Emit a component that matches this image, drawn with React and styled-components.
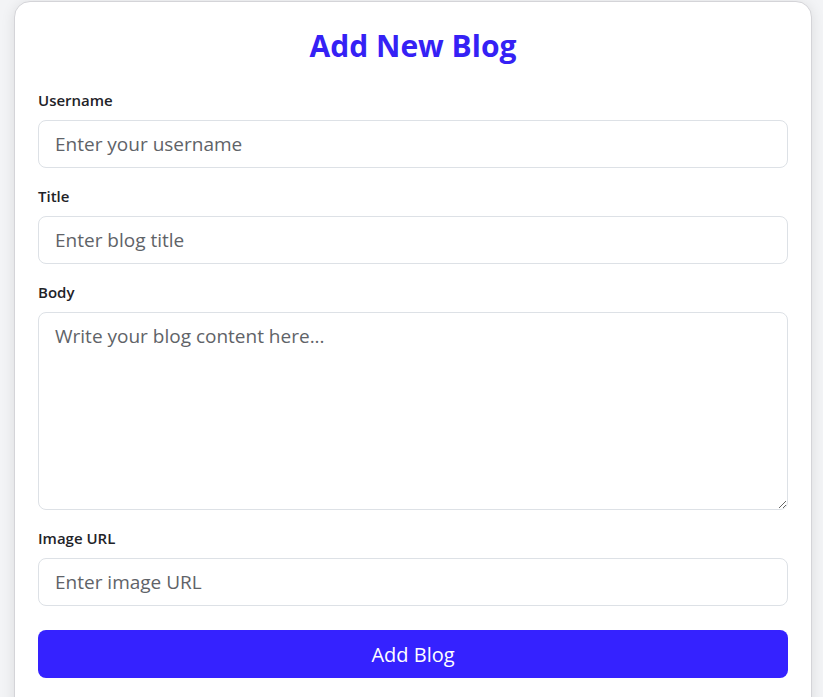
import styled, { createGlobalStyle } from "styled-components";

const GlobalStyle = createGlobalStyle`
  html, body {
    margin: 0;
    padding: 0;
    background: #f3f4f6;
    font-family: "Open Sans", "Noto Sans", sans-serif;
  }
`;

function App() {
  return (
    <Page>
      <GlobalStyle />
      <Card>
        <Heading>Add New Blog</Heading>
        <Form onSubmit={(e) => e.preventDefault()}>
          <Field>
            <Label>Username</Label>
            <Input placeholder="Enter your username" />
          </Field>
          <Field>
            <Label>Title</Label>
            <Input placeholder="Enter blog title" />
          </Field>
          <Field>
            <Label>Body</Label>
            <TextArea placeholder="Write your blog content here..." />
          </Field>
          <Field>
            <Label>Image URL</Label>
            <Input placeholder="Enter image URL" />
          </Field>
          <SubmitButton type="submit">Add Blog</SubmitButton>
        </Form>
      </Card>
    </Page>
  );
}

export default App;

const Page = styled.div`
  min-height: 100vh;
  padding: 1px 11px 0 14px;
  box-sizing: border-box;
`;

const Card = styled.div`
  background: #fff;
  border: 1px solid #d4d4d8;
  border-radius: 16px;
  box-shadow: 0 2px 14px rgba(0, 0, 0, 0.1);
  padding: 24px 23px 40px;
`;

const Heading = styled.h1`
  margin: 0 0 22px;
  text-align: center;
  color: #3521f5;
  font-size: 30px;
  font-weight: 700;
  line-height: 40px;
`;

const Form = styled.form`
  display: flex;
  flex-direction: column;
  gap: 16px;
`;

const Field = styled.div`
  display: flex;
  flex-direction: column;
  gap: 8px;
`;

const Label = styled.label`
  font-size: 15px;
  font-weight: 600;
  color: #1f2328;
  line-height: 24px;
`;

const Input = styled.input`
  box-sizing: border-box;
  width: 100%;
  height: 48px;
  padding: 0 16px;
  border: 1px solid #dde1e6;
  border-radius: 8px;
  font-family: inherit;
  font-size: 19px;
  color: #374151;
  outline: none;
  &::placeholder {
    color: #5f6368;
  }
`;

const TextArea = styled.textarea`
  box-sizing: border-box;
  width: 100%;
  height: 198px;
  padding: 10px 16px;
  border: 1px solid #dde1e6;
  border-radius: 8px;
  font-family: inherit;
  font-size: 19px;
  line-height: 26px;
  color: #374151;
  outline: none;
  resize: vertical;
  &::placeholder {
    color: #5f6368;
  }
`;

const SubmitButton = styled.button`
  margin-top: 8px;
  height: 48px;
  border: none;
  border-radius: 8px;
  background: #3522ff;
  color: #fff;
  font-family: inherit;
  font-size: 20px;
  font-weight: 400;
  cursor: pointer;
`;
